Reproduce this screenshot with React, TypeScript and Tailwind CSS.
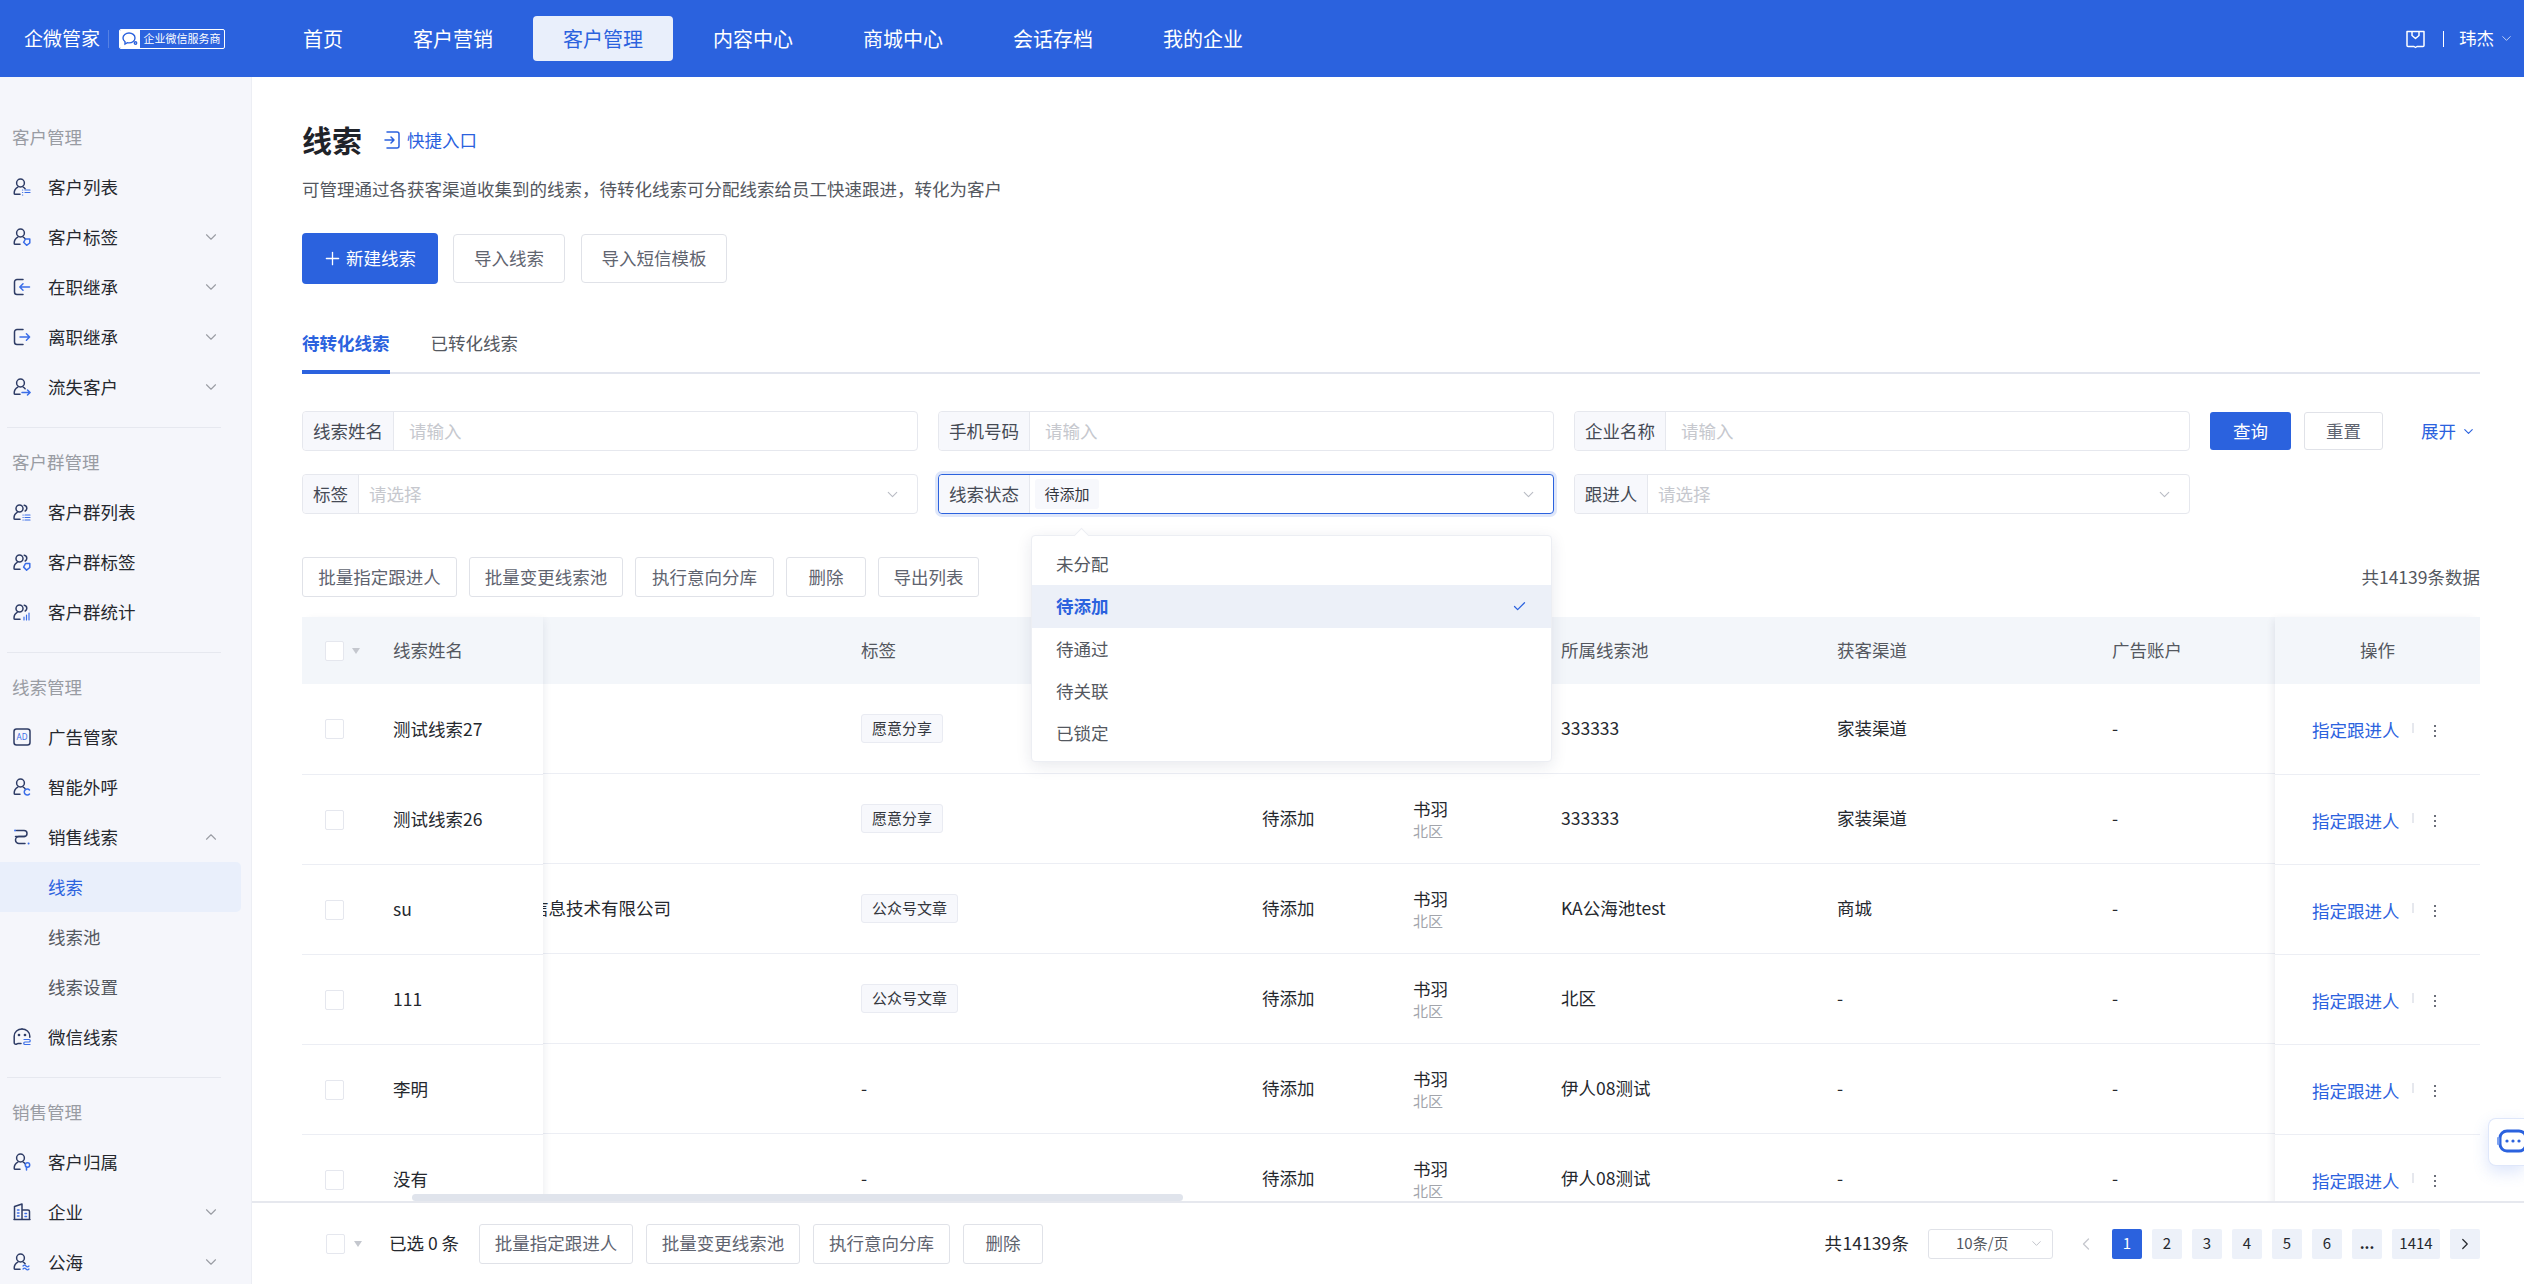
import type { ReactNode } from "react";
import { Check, ChevronDown, ChevronLeft, ChevronRight, ChevronUp, Plus } from "lucide-react";

const navItems = ["首页", "客户营销", "客户管理", "内容中心", "商城中心", "会话存档", "我的企业"];

const DARK = "#2e3c66";
const BLUE = "#3b6ee8";

function Ico({ children }: { children: ReactNode }) {
  return (
    <svg width="18" height="18" viewBox="0 0 18 18" fill="none" strokeWidth="1.5" strokeLinecap="round" strokeLinejoin="round" className="shrink-0">
      {children}
    </svg>
  );
}

function Person({ x = 0 }: { x?: number }) {
  return (
    <g stroke={DARK} transform={`translate(${x} 0)`}>
      <circle cx="7.5" cy="5" r="3.9" />
      <path d="M4.8 9.2C2.6 10.4 1.2 12.6 1.2 15.2c0 .8.4 1.1 1.1 1.1H7" />
      <path d="M10.2 9.2c.8.4 1.4 1 1.9 1.6" />
    </g>
  );
}

function GroupPerson() {
  return (
    <g stroke={DARK}>
      <circle cx="6.5" cy="5.5" r="3.5" />
      <path d="M4.2 9.4C2 10.6 1 12.8 1 15.2c0 .8.4 1.1 1.1 1.1H7" />
      <path d="M11.2 2.2c1.6.3 2.6 1.6 2.6 3 0 1.2-.6 2.2-1.6 2.8" />
    </g>
  );
}

const icons: Record<string, ReactNode> = {
  客户列表: <Ico><Person /><path stroke={BLUE} d="M9.5 12h.2M12 12h5M9.5 14.5h.2M12 14.5h5M9.5 17h.2" strokeWidth="1.2" /></Ico>,
  客户标签: <Ico><Person /><path stroke={BLUE} d="M12.5 11h4.3v4l-3.2 2.3-3-3z" /></Ico>,
  在职继承: <Ico><path stroke={DARK} d="M10 1.5H4a2.5 2.5 0 0 0-2.5 2.5v10A2.5 2.5 0 0 0 4 16.5h6" /><path stroke={BLUE} d="M16.5 9H7M10 5.8 6.8 9l3.2 3.2" /></Ico>,
  离职继承: <Ico><path stroke={DARK} d="M10 1.5H4a2.5 2.5 0 0 0-2.5 2.5v10A2.5 2.5 0 0 0 4 16.5h6" /><path stroke={BLUE} d="M7 9h9.5M13.4 5.8 16.6 9l-3.2 3.2" /></Ico>,
  流失客户: <Ico><Person /><path stroke={BLUE} d="M9 14.5h8M14.5 12l2.6 2.5-2.6 2.5" /></Ico>,
  客户群列表: <Ico><GroupPerson /><path stroke={BLUE} d="M10 12h.2M12 12h5M10 14.5h.2M12 14.5h5M10 17h.2M12 17h5" strokeWidth="1.2" /></Ico>,
  客户群标签: <Ico><GroupPerson /><path stroke={BLUE} d="M12.5 10.5h4.3v4l-3.2 2.6-3-3z" /></Ico>,
  客户群统计: <Ico><GroupPerson /><path stroke={BLUE} d="M11 17v-3M13.5 17v-5M16 17v-7" strokeWidth="1.2" /></Ico>,
  广告管家: (
    <Ico>
      <rect x="1" y="1" width="16" height="16" rx="2.5" stroke={DARK} />
      <text x="9" y="12" textAnchor="middle" fontSize="8" fill={BLUE} fontFamily="Noto Sans">AD</text>
    </Ico>
  ),
  智能外呼: <Ico><Person /><path stroke={BLUE} d="M16.5 12a3 3 0 1 0 0 4" strokeWidth="1.5" /></Ico>,
  销售线索: <Ico><path stroke={DARK} d="M2.5 8.5H11a3 3 0 0 0 0-6H3.5" /><path stroke={DARK} d="M12 8.5H6a3.5 3.5 0 0 0 0 7h6" /><path stroke={BLUE} d="M2 2.5h.2M15.5 15.5h.2" strokeWidth="1.8" /></Ico>,
  微信线索: (
    <Ico>
      <path stroke={DARK} d="M9 1C4.8 1 1.2 4 1.2 8.2v6.4c0 1.2 1 2 2 1.6l2-.8H8" />
      <path stroke={DARK} d="M9 1c4.2 0 7.8 3 7.8 7.2v1" />
      <circle cx="6" cy="7" r=".6" fill={DARK} stroke={DARK} />
      <circle cx="12" cy="7" r=".6" fill={DARK} stroke={DARK} />
      <path stroke={BLUE} d="M11 11.5h5a1.2 1.2 0 0 1 0 2.5h-4a1.2 1.2 0 0 0 0 2.5h5" strokeWidth="1.2" />
    </Ico>
  ),
  客户归属: <Ico><Person /><circle cx="14.5" cy="12" r="2.2" stroke={BLUE} /><path stroke={BLUE} d="M13.5 14v3" /></Ico>,
  企业: (
    <Ico>
      <path stroke={DARK} d="M1.5 16.5V3.5L9 1v15.5M9 7h6a1.5 1.5 0 0 1 1.5 1.5v8M1 16.5h16" />
      <path stroke={BLUE} d="M4.5 7h1.5M4.5 10h1.5M4.5 13h1.5M12 10.5h1.5M12 13.5h1.5" />
    </Ico>
  ),
  公海: <Ico><Person /><path stroke={BLUE} d="M10 13c1-1.2 2-1.2 3 0s2 1.2 3 0M10 16c1-1.2 2-1.2 3 0s2 1.2 3 0" strokeWidth="1.2" /></Ico>,
};

type SideEntry = { label: string; arrow?: "down" | "up"; sub?: boolean; active?: boolean };
const sideSections: { title: string; items: SideEntry[] }[] = [
  {
    title: "客户管理",
    items: [
      { label: "客户列表" },
      { label: "客户标签", arrow: "down" },
      { label: "在职继承", arrow: "down" },
      { label: "离职继承", arrow: "down" },
      { label: "流失客户", arrow: "down" },
    ],
  },
  {
    title: "客户群管理",
    items: [{ label: "客户群列表" }, { label: "客户群标签" }, { label: "客户群统计" }],
  },
  {
    title: "线索管理",
    items: [
      { label: "广告管家" },
      { label: "智能外呼" },
      { label: "销售线索", arrow: "up" },
      { label: "线索", sub: true, active: true },
      { label: "线索池", sub: true },
      { label: "线索设置", sub: true },
      { label: "微信线索" },
    ],
  },
  {
    title: "销售管理",
    items: [{ label: "客户归属" }, { label: "企业", arrow: "down" }, { label: "公海", arrow: "down" }],
  },
];

type Row = {
  name: string;
  company?: string;
  tag?: string;
  pool: string;
  channel: string;
};

const rows: Row[] = [
  { name: "测试线索27", tag: "愿意分享", pool: "333333", channel: "家装渠道" },
  { name: "测试线索26", tag: "愿意分享", pool: "333333", channel: "家装渠道" },
  { name: "su", company: "信息技术有限公司", tag: "公众号文章", pool: "KA公海池test", channel: "商城" },
  { name: "111", tag: "公众号文章", pool: "北区", channel: "-" },
  { name: "李明", pool: "伊人08测试", channel: "-" },
  { name: "没有", pool: "伊人08测试", channel: "-" },
];

const midCols = "grid grid-cols-[318px_401px_151px_148px_276px_275px_1fr] items-center";

function Btn({ w, children }: { w: string; children: ReactNode }) {
  return (
    <button className={`${w} h-10 rounded-[3px] border border-[#e0e2e8] bg-white text-[#5f6470] flex items-center justify-center shrink-0`}>
      {children}
    </button>
  );
}

function Box() {
  return <span className="block w-[19px] h-5 rounded-[2px] border border-[#e5e7ee] bg-white shrink-0" />;
}

function Caret() {
  return <span className="block w-0 h-0 border-x-[4px] border-x-transparent border-t-[6px] border-t-[#c4c7ce]" />;
}

function Field({ label, labelW, children, focused }: { label: string; labelW: string; children: ReactNode; focused?: boolean }) {
  return (
    <div
      className={`w-[616px] h-10 flex items-stretch rounded-[4px] border bg-white ${
        focused ? "border-[#2b62de] ring-[3px] ring-[#dfe7fa]" : "border-[#e6e8ee]"
      }`}
    >
      <div className={`${labelW} shrink-0 flex items-center justify-center bg-[#f7f8fc] border-r border-[#e6e8ee] rounded-l-[4px] text-[#454a55]`}>
        {label}
      </div>
      {children}
    </div>
  );
}

function SelectBody({ placeholder, value }: { placeholder?: string; value?: string }) {
  return (
    <div className="flex-1 flex items-center justify-between pr-[16px]">
      {value ? (
        <span className="ml-[5px] h-[30px] w-16 rounded-[3px] bg-[#f7f8fc] flex items-center justify-center text-[15px] text-[#33363d]">{value}</span>
      ) : (
        <span className="pl-[10px] text-[#c6c8ce]">{placeholder}</span>
      )}
      <ChevronDown size={17} strokeWidth={1.5} className="text-[#b9bcc4]" />
    </div>
  );
}

function Sidebar() {
  return (
    <aside className="w-[252px] shrink-0 bg-[#f5f6fb] border-r border-[#eceef4] pt-9 overflow-hidden">
      {sideSections.map((section, i) => (
        <div key={section.title}>
          {i > 0 && <div className="ml-[7px] w-[214px] h-px bg-[#e6e8ef] mt-[15px] mb-[10px]" />}
          <div className="h-[49px] flex items-center pl-3 text-[#999ca3]">{section.title}</div>
          {section.items.map((item) => (
            <div
              key={item.label}
              className={`h-[50px] w-[241px] flex items-center rounded-r-[5px] ${
                item.active ? "bg-[#e9effb] text-[#2b62de]" : item.sub ? "text-[#54585f]" : "text-[#25282e]"
              }`}
            >
              <span className="w-[48px] shrink-0 pl-[13px]">{icons[item.label]}</span>
              <span className="flex-1">{item.label}</span>
              {item.arrow === "down" && <ChevronDown size={18} strokeWidth={1.5} className="mr-[21px] text-[#9a9da4]" />}
              {item.arrow === "up" && <ChevronUp size={18} strokeWidth={1.5} className="mr-[21px] text-[#9a9da4]" />}
            </div>
          ))}
        </div>
      ))}
    </aside>
  );
}

function Header() {
  return (
    <header className="h-[77px] shrink-0 bg-[#2b62de] flex items-center text-white">
      <span className="ml-6 text-[19px] w-[77px] whitespace-nowrap">企微管家</span>
      <span className="ml-[7px] w-px h-[18px] bg-white/20" />
      <div className="ml-[10px] w-[106px] h-5 flex items-stretch rounded-[2px] border border-white overflow-hidden">
        <span className="w-[20px] bg-white flex items-center justify-center">
          <svg width="16" height="14" viewBox="0 0 16 14" fill="none" stroke="#2b62de" strokeWidth="1.4">
            <path d="M7 1C3.7 1 1 3.2 1 6c0 1.5.8 2.8 2 3.7L3 12l2.4-1.3c.5.1 1 .2 1.6.2 3.3 0 6-2.2 6-5S10.3 1 7 1z" />
            <circle cx="13.5" cy="11" r="1.2" />
          </svg>
        </span>
        <span className="flex-1 flex items-center justify-center text-[11px] whitespace-nowrap">企业微信服务商</span>
      </div>
      <nav className="ml-[48px] flex gap-[10px] text-[20px]">
        {navItems.map((n) => (
          <span
            key={n}
            className={`h-[45px] px-[30px] flex items-center rounded-[4px] ${n === "客户管理" ? "bg-[#e9effb] text-[#2b62de]" : ""}`}
          >
            {n}
          </span>
        ))}
      </nav>
      <div className="ml-auto flex items-center">
        <svg width="21" height="20" viewBox="0 0 21 20" fill="none" stroke="white" strokeWidth="1.5" strokeLinejoin="round">
          <path d="M2 2.5h17v14a1 1 0 0 1-1 1h-6l-1.5 1-1.5-1H3a1 1 0 0 1-1-1z" />
          <path d="M7 2.5v4l3.5 3 3.5-3v-4" />
        </svg>
        <span className="ml-[17px] w-px h-4 bg-white" />
        <span className="ml-[15px]">玮杰</span>
        <ChevronDown size={15} strokeWidth={1.5} className="ml-[5px] mr-[10px] text-[#c9d6f6]" />
      </div>
    </header>
  );
}

function StatusDropdown() {
  const opts = ["未分配", "待添加", "待通过", "待关联", "已锁定"];
  return (
    <div className="absolute left-[729px] top-[124px] z-30 w-[521px] h-[227px] pt-[7px] rounded-[4px] bg-white border border-[#eceef3] shadow-[0_4px_16px_rgba(30,40,80,0.1)]">
      <span className="absolute -top-[6px] left-[44px] w-[11px] h-[11px] rotate-45 bg-white border-l border-t border-[#eceef3]" />
      {opts.map((o) => (
        <div
          key={o}
          className={`h-[42.3px] flex items-center justify-between pl-[24px] pr-[24px] ${
            o === "待添加" ? "bg-[#ecf0f8] text-[#2b62de] font-bold" : "text-[#54585f]"
          }`}
        >
          {o}
          {o === "待添加" && <Check size={15} strokeWidth={2} />}
        </div>
      ))}
    </div>
  );
}

function Filters() {
  return (
    <div className="relative mt-[37px]">
      <div className="flex items-center gap-5">
        <Field label="线索姓名" labelW="w-[91px]"><span className="pl-[15px] flex items-center text-[#c6c8ce]">请输入</span></Field>
        <Field label="手机号码" labelW="w-[91px]"><span className="pl-[15px] flex items-center text-[#c6c8ce]">请输入</span></Field>
        <Field label="企业名称" labelW="w-[91px]"><span className="pl-[15px] flex items-center text-[#c6c8ce]">请输入</span></Field>
        <button className="w-[81px] h-[38px] rounded-[3px] bg-[#2b62de] text-white">查询</button>
        <button className="-ml-[7px] w-[79px] h-[38px] rounded-[3px] border border-[#e0e2e8] text-[#5f6470]">重置</button>
        <span className="ml-[18px] flex items-center text-[#2b62de]">
          展开
          <ChevronDown size={15} strokeWidth={1.8} className="ml-[5px]" />
        </span>
      </div>
      <div className="mt-[23px] flex gap-5">
        <Field label="标签" labelW="w-[56px]"><SelectBody placeholder="请选择" /></Field>
        <Field label="线索状态" labelW="w-[91px]" focused><SelectBody value="待添加" /></Field>
        <Field label="跟进人" labelW="w-[73px]"><SelectBody placeholder="请选择" /></Field>
      </div>
      <StatusDropdown />
    </div>
  );
}

function Tag({ children }: { children: ReactNode }) {
  return (
    <span className="inline-flex h-[29px] px-[10px] items-center rounded-[3px] border border-[#e9ebf2] bg-[#f7f8fc] text-[15px] text-[#33363d] whitespace-nowrap">
      {children}
    </span>
  );
}

function LeadsTable() {
  return (
    <div className="mt-5 flex items-start">
      {/* 左侧固定列 */}
      <div className="w-[241px] shrink-0 relative z-10 bg-white shadow-[4px_0_8px_-3px_rgba(30,40,80,0.08)]">
        <div className="h-[67px] bg-[#f3f6fa] flex items-center pl-[23px] text-[#54585f]">
          <Box />
          <span className="ml-2"><Caret /></span>
          <span className="ml-[33px]">线索姓名</span>
        </div>
        {rows.map((r, i) => (
          <div key={r.name} className={`${i === 0 ? "h-[91px]" : "h-[90px]"} border-b border-[#eceef4] flex items-center pl-[23px] text-[#25282e]`}>
            <Box />
            <span className="ml-[49px]">{r.name}</span>
          </div>
        ))}
      </div>

      <div className="flex-1 min-w-0 overflow-hidden">
        <div className={`${midCols} h-[67px] bg-[#f3f6fa] text-[#54585f]`}>
          <span />
          <span>标签</span>
          <span>线索状态</span>
          <span>跟进人</span>
          <span>所属线索池</span>
          <span>获客渠道</span>
          <span>广告账户</span>
        </div>
        {rows.map((r) => (
          <div key={r.name} className={`${midCols} h-[90px] border-b border-[#eceef4] text-[#25282e]`}>
            <span className="-ml-[12px] whitespace-nowrap">{r.company ?? ""}</span>
            <span>{r.tag ? <Tag>{r.tag}</Tag> : "-"}</span>
            <span>待添加</span>
            <span className="flex flex-col leading-[24px]">
              书羽
              <span className="text-[15px] leading-[20px] text-[#a2a5ac]">北区</span>
            </span>
            <span>{r.pool}</span>
            <span>{r.channel}</span>
            <span>-</span>
          </div>
        ))}
      </div>

      {/* 右侧固定列 */}
      <div className="w-[205px] shrink-0 relative z-10 bg-white shadow-[-4px_0_8px_-3px_rgba(30,40,80,0.1)]">
        <div className="h-[67px] bg-[#f3f6fa] flex items-center justify-center text-[#54585f]">操作</div>
        {rows.map((r, i) => (
          <div key={r.name} className={`${i === 0 ? "h-[91px]" : "h-[90px]"} border-b border-[#eceef4] flex items-center pl-[37px] pt-[3px] text-[#2b62de]`}>
            <span className="whitespace-nowrap">指定跟进人</span>
            <span className="ml-[12px] w-[2px] h-[10px] -mt-[6px] bg-[#e6e8ee]" />
            <span className="ml-[20px] flex flex-col gap-[3px]">
              <span className="w-[2px] h-[2px] bg-[#6b6f7a]" />
              <span className="w-[2px] h-[2px] bg-[#6b6f7a]" />
              <span className="w-[2px] h-[2px] bg-[#6b6f7a]" />
            </span>
          </div>
        ))}
      </div>
    </div>
  );
}

function Footer() {
  const pages = ["1", "2", "3", "4", "5", "6", "..."];
  return (
    <footer className="h-[83px] shrink-0 border-t-2 border-[#e6e8ee] bg-white flex items-center pl-[74px] pr-[44px]">
      <Box />
      <span className="ml-[9px]"><Caret /></span>
      <span className="ml-[27px] w-[90px] text-[#25282e] whitespace-nowrap">已选 0 条</span>
      <div className="flex gap-[13px]">
        <Btn w="w-[154px]">批量指定跟进人</Btn>
        <Btn w="w-[154px]">批量变更线索池</Btn>
        <Btn w="w-[137px]">执行意向分库</Btn>
        <Btn w="w-[80px]">删除</Btn>
      </div>
      <span className="ml-auto text-[#25282e] whitespace-nowrap [word-spacing:-3.5px]">共 14139 条</span>
      <div className="ml-[19px] w-[125px] h-[30px] rounded-[3px] border border-[#e0e2e8] flex items-center justify-between pl-[27px] pr-[8px] text-[15px] text-[#54585f]">
        10条/页
        <ChevronDown size={15} strokeWidth={1.4} className="text-[#b9bcc4]" />
      </div>
      <ChevronLeft size={20} strokeWidth={1.6} className="ml-[23px] mr-[16px] text-[#c6c8ce]" />
      <div className="flex gap-[10px] text-[15px]">
        {pages.map((p) => (
          <span
            key={p}
            className={`w-[30px] h-[30px] rounded-[2px] flex items-center justify-center ${p === "1" ? "bg-[#2b62de] text-white" : "bg-[#edf1f9] text-[#25282e]"} ${p === "..." ? "font-bold" : ""}`}
          >
            {p}
          </span>
        ))}
        <span className="w-[48px] h-[30px] rounded-[2px] flex items-center justify-center bg-[#edf1f9] text-[#25282e]">1414</span>
        <span className="w-[30px] h-[30px] rounded-[2px] flex items-center justify-center bg-[#edf1f9] text-[#25282e]">
          <ChevronRight size={18} strokeWidth={1.6} />
        </span>
      </div>
    </footer>
  );
}

export default function App() {
  return (
    <div className="h-screen w-full flex flex-col overflow-hidden bg-white text-[17.5px] [font-family:'Noto_Sans_CJK_SC','Noto_Sans',sans-serif]">
      <Header />
      <div className="flex-1 min-h-0 flex">
        <Sidebar />
        <main className="flex-1 min-w-0 flex flex-col">
          <div className="relative flex-1 min-h-0 overflow-hidden pl-[50px] pr-[44px] pt-[43px]">
            <div className="h-10 flex items-center">
              <h1 className="-mt-[2px] text-[30px] font-bold text-[#1f2329]">线索</h1>
              <span className="ml-[22px] flex items-center text-[#2b62de]">
                <svg width="16" height="18" viewBox="0 0 16 18" fill="none" stroke="#2b62de" strokeWidth="1.5" strokeLinecap="round" strokeLinejoin="round">
                  <path d="M3 1h10a2 2 0 0 1 2 2v12a2 2 0 0 1-2 2H3M1 9h9M7 6l3 3-3 3" />
                </svg>
                <span className="ml-[7px]">快捷入口</span>
              </span>
            </div>
            <p className="mt-4 h-[26px] flex items-center text-[#54585f]">可管理通过各获客渠道收集到的线索，待转化线索可分配线索给员工快速跟进，转化为客户</p>
            <div className="mt-[31px] h-[51px] flex items-center">
              <button className="w-[136px] h-[51px] rounded-[4px] bg-[#2b62de] text-white flex items-center justify-center">
                <Plus size={21} strokeWidth={1.5} className="mr-[3px] -ml-[2px]" />
                新建线索
              </button>
              <button className="ml-[15px] w-[112px] h-[49px] rounded-[4px] border border-[#e0e2e8] text-[#5f6470]">导入线索</button>
              <button className="ml-[16px] w-[146px] h-[49px] rounded-[4px] border border-[#e0e2e8] text-[#5f6470]">导入短信模板</button>
            </div>
            <div className="mt-10 h-[50px] flex gap-[41px] border-b-2 border-[#e2e5ee]">
              <span className="h-[50px] pb-2 flex items-center border-b-4 border-[#2b62de] text-[#2b62de] font-bold">待转化线索</span>
              <span className="h-[50px] pb-3 flex items-center text-[#54585f]">已转化线索</span>
            </div>
            <Filters />
            <div className="mt-[43px] flex items-center gap-3">
              <Btn w="w-[155px]">批量指定跟进人</Btn>
              <Btn w="w-[154px]">批量变更线索池</Btn>
              <Btn w="w-[139px]">执行意向分库</Btn>
              <Btn w="w-[80px]">删除</Btn>
              <Btn w="w-[101px]">导出列表</Btn>
              <span className="ml-auto text-[#54585f]">共14139条数据</span>
            </div>
            <LeadsTable />
            <span className="absolute z-20 left-[160px] bottom-0 w-[771px] h-[7px] rounded-[4px] bg-[#e0e4ec]" />
          </div>
          <Footer />
        </main>
      </div>
      <div className="absolute right-0 top-[1118px] z-40 w-[36px] h-[48px] rounded-l-[8px] border border-r-0 border-[#dfe7fa] bg-white shadow-[0_6px_16px_rgba(59,110,232,0.18)] flex items-center overflow-hidden pl-[8px]">
        <svg width="32" height="26" viewBox="0 0 32 26" fill="none" className="shrink-0">
          <rect x="3" y="2" width="26" height="20" rx="7" stroke="#2b62de" strokeWidth="3" />
          <rect x="0" y="8" width="2.5" height="8" rx="1" fill="#7ea2ef" />
          <circle cx="10" cy="12" r="1.6" fill="#2b62de" />
          <circle cx="16" cy="12" r="1.6" fill="#2b62de" />
          <circle cx="22" cy="12" r="1.6" fill="#2b62de" />
        </svg>
      </div>
    </div>
  );
}
